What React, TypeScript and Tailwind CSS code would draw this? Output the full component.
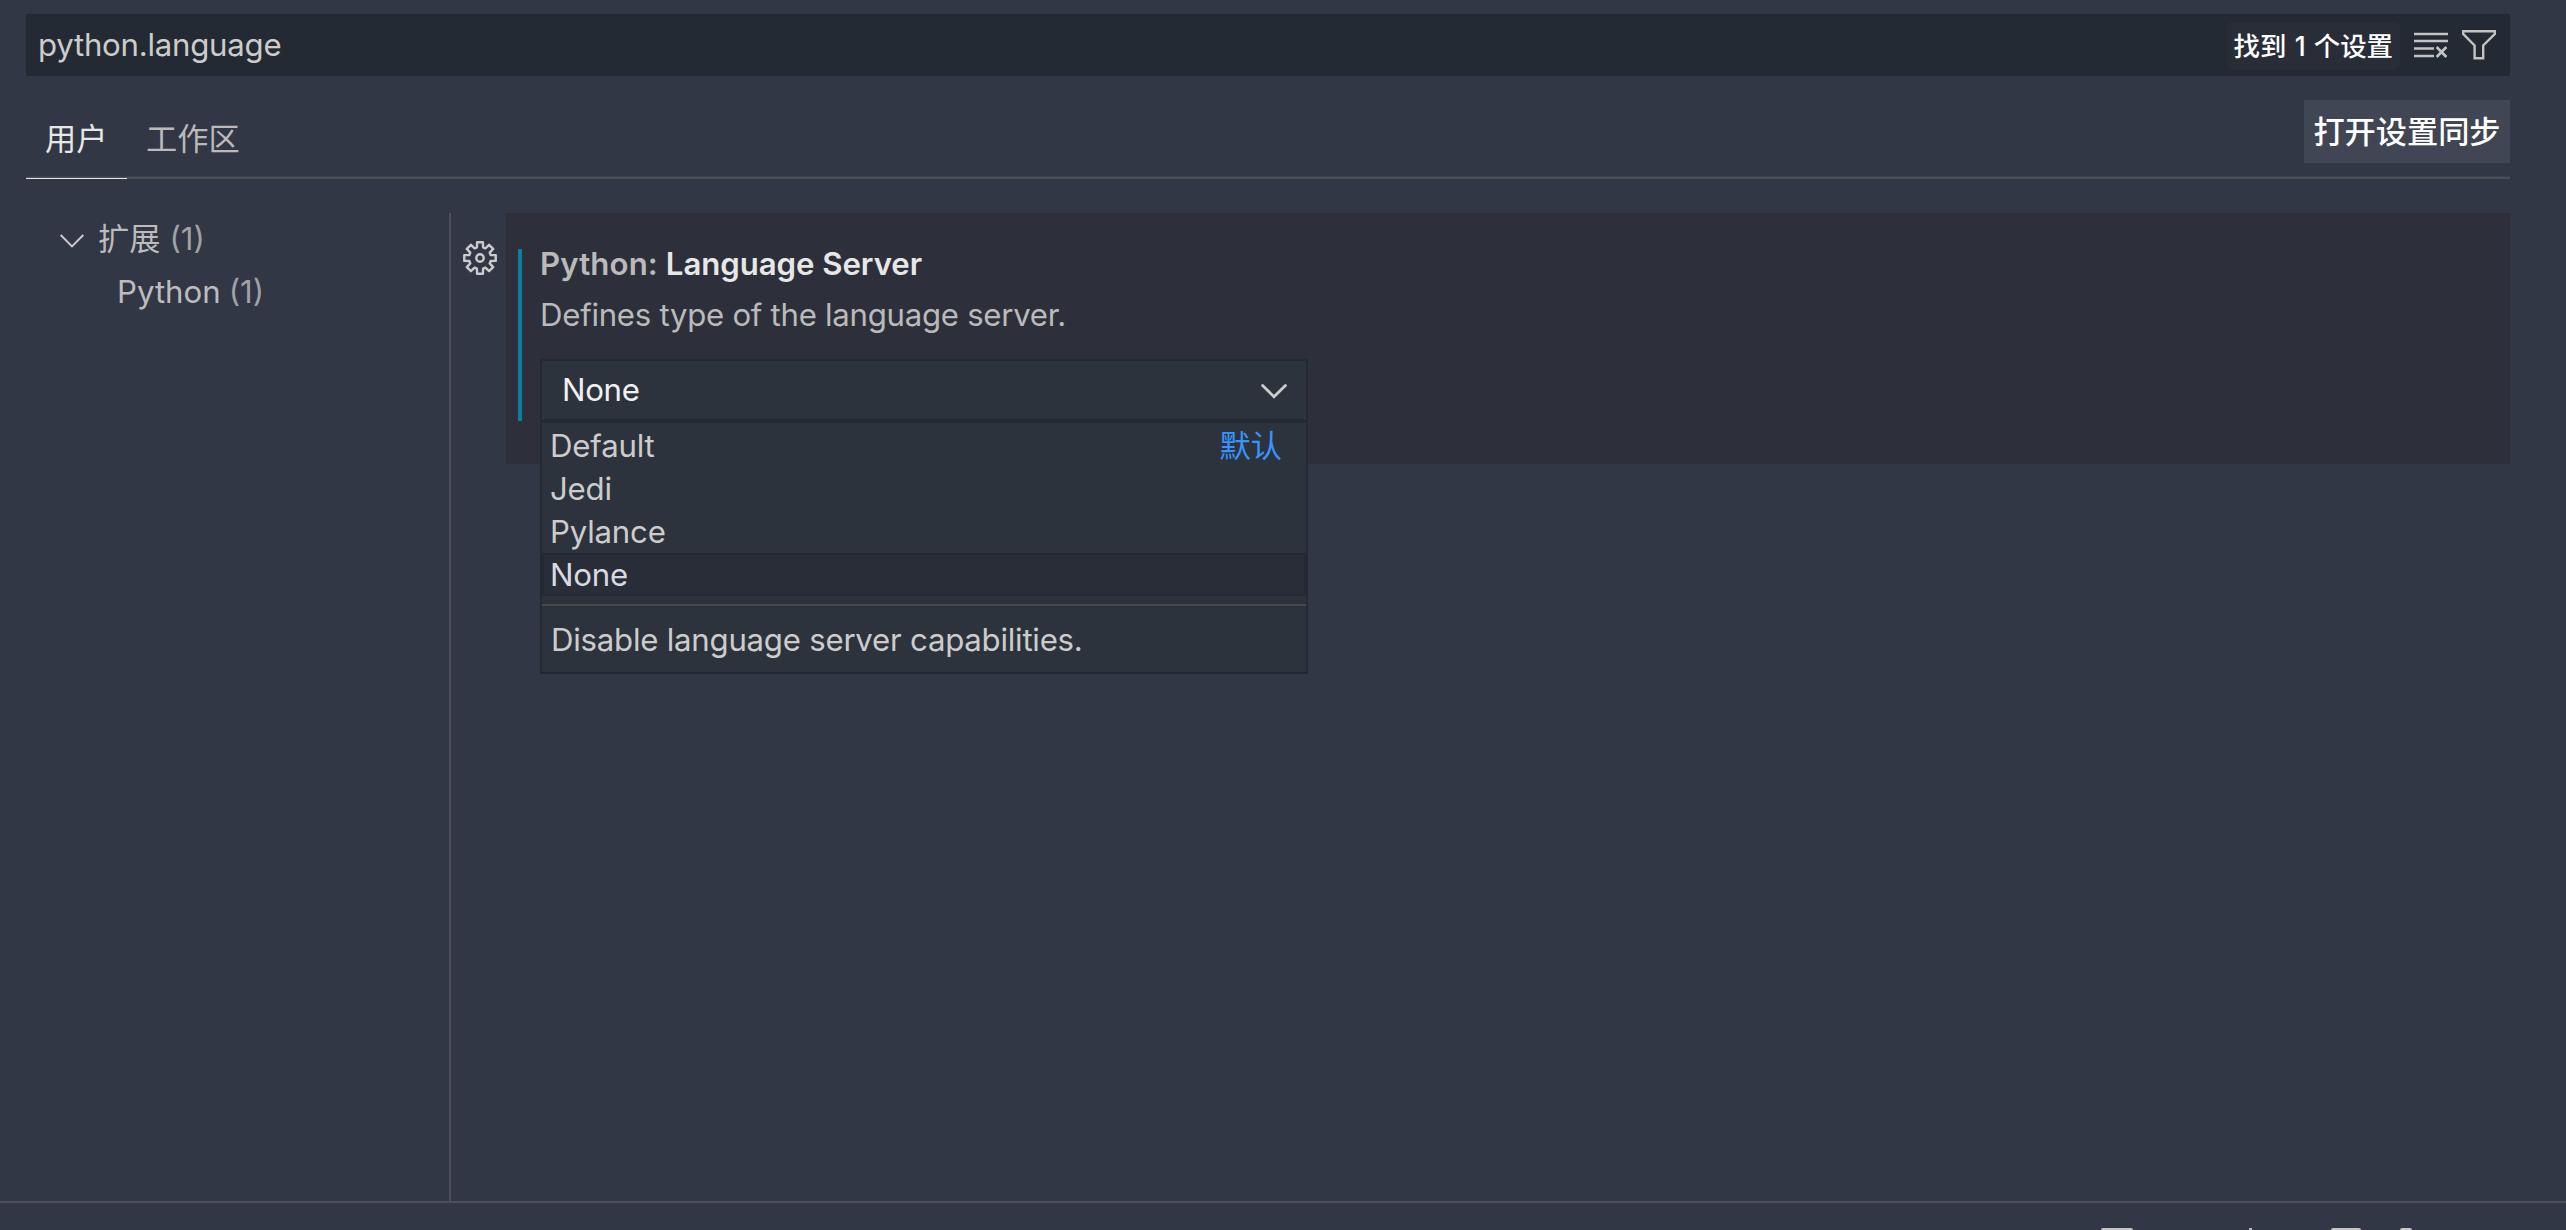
import type { ReactNode } from "react";

const options = [
  { label: "Default", detail: "默认" },
  { label: "Jedi" },
  { label: "Pylance" },
  { label: "None", selected: true },
];

function ClearIcon() {
  return (
    <svg viewBox="0 0 34 26" className="h-[26px] w-[34px]" fill="none" stroke="#c3c3c2">
      <path d="M0 2h34M0 9h34M0 16.5h20M0 24h20" strokeWidth="2.4" />
      <path d="M22.6 15l9.8 10M32.4 15l-9.8 10" strokeWidth="2.6" />
    </svg>
  );
}

function FilterIcon() {
  return (
    <svg viewBox="0 0 34 30" className="h-[30px] w-[34px]" fill="none" stroke="#c3c3c2" strokeWidth="2.4">
      <path d="M1.1 1.3h31.8v2.6L21.2 15.4v12.9h-8.6V15.4L1.1 3.9z" />
    </svg>
  );
}

const teeth = Array.from({ length: 8 }, (_, i) => {
  const at = (r: number, deg: number) => {
    const a = ((i * 45 + deg) * Math.PI) / 180;
    return `${(17 + r * Math.sin(a)).toFixed(2)} ${(17 - r * Math.cos(a)).toFixed(2)}`;
  };
  return `${at(11.1, -16)} L${at(16, -10.5)} L${at(16, 10.5)} L${at(11.1, 16)}`;
});

function GearIcon() {
  return (
    <svg viewBox="0 0 34 34" className="h-[34px] w-[34px]" fill="none" stroke="#cbcbcb" strokeWidth="2.4" strokeLinejoin="round">
      <path d={`M${teeth.join(" L")} Z`} />
      <circle cx="17" cy="17" r="3.7" />
    </svg>
  );
}

function Tab({ active, children }: { active?: boolean; children: ReactNode }) {
  return (
    <div
      className={
        active
          ? "h-[103px] w-[101px] border-b border-[#e7e7e7] pl-[19px] leading-[127px] text-[#e7e7e7]"
          : "h-[103px] w-[132px] pl-[19px] leading-[127px] text-[#bababa]"
      }
    >
      {children}
    </div>
  );
}

export default function App() {
  return (
    <div className="flex h-[1230px] w-[2566px] flex-col overflow-hidden bg-[#313745] font-['Inter','Noto_Sans_CJK_SC',sans-serif] text-[31.2px] text-[#cccccc]">
      <header className="mr-14 ml-[26px] pt-3.5">
        <div className="flex h-[62px] items-center bg-[#232a33] pl-3">
          <span className="grow tracking-[-0.25px]">python.language</span>
          <span className="mt-px h-[47px] rounded-[5px] bg-[#292d37] px-[7px] text-[26.4px] leading-[48px] font-medium text-white [word-spacing:1.2px]">找到 1 个设置</span>
          <div className="ml-3.5 flex items-center gap-3.5 pr-3.5">
            <ClearIcon />
            <FilterIcon />
          </div>
        </div>
        <div className="relative flex h-[103px] justify-between">
          <div className="absolute inset-x-0 bottom-0 h-[3px] border-b-2 border-[#4a5058] bg-[#3b414c]" />
          <nav className="relative flex">
            <Tab active>用户</Tab>
            <Tab>工作区</Tab>
          </nav>
          <button className="mt-6 h-[63px] w-[206px] bg-[#404653] pt-px leading-[63px] font-medium whitespace-nowrap text-white">打开设置同步</button>
        </div>
      </header>

      <main className="mt-[34px] flex h-[988px]">
        <aside className="w-[449px] text-[#bcbcbd]">
          <div className="flex h-[53px] items-center pl-[60px]">
            <svg viewBox="0 0 24 14" className="mt-0.5 h-3.5 w-6" fill="none" stroke="#cccccc" strokeWidth="1.9">
              <path d="M.7 1l11.3 11.3L23.3 1" />
            </svg>
            <span className="ml-3.5">扩展</span>
            <span className="ml-[9px] text-[#a0a2a6]">(1)</span>
          </div>
          <div className="flex h-[53px] items-center pl-[117px]">
            <span>Python</span>
            <span className="ml-2 text-[#a0a2a6]">(1)</span>
          </div>
        </aside>

        <section className="flex grow border-l-2 border-[#4b4f57]">
          <div className="w-[55px] pt-7 pl-3">
            <GearIcon />
          </div>
          <div className="mr-14 flex h-[251px] grow bg-[#2d303b] pl-3">
            <div className="mt-9 h-[172px] w-1 bg-[#0c7d9d]" />
            <div className="ml-[18px] w-[768px]">
              <h2 className="mt-7 h-[46px] leading-[46px] font-semibold whitespace-pre text-[#e7e7e7]">
                <span className="tracking-[0.1px] text-[#bababb]">Python: </span>
                <span className="tracking-[-0.06px]">Language Server</span>
              </h2>
              <p className="mt-1 h-12 leading-[48px] tracking-[-0.28px] text-[#bababb]">Defines type of the language server.</p>
              <div className="relative mt-5">
                <div className="flex h-[62px] items-center justify-between border-2 border-[#232a33] bg-[#2c333d] pr-[19px] pl-5 text-[#f0f0f0]">
                  <span className="tracking-[-0.3px]">None</span>
                  <svg viewBox="0 0 26 15" className="mt-0.5 h-[15px] w-[26px]" fill="none" stroke="#cccccc" strokeWidth="2.8" strokeLinecap="round">
                    <path d="M1.6 1.6L13 12.8 24.4 1.6" />
                  </svg>
                </div>
                <div className="absolute inset-x-0 top-[62px] border-2 border-[#232a33] bg-[#2c333d]">
                  <ul className="pt-px pb-2">
                    {options.map((o) => (
                      <li
                        key={o.label}
                        className={
                          o.selected
                            ? "flex h-[43px] items-center border-2 border-[#232933] bg-[#292d37] px-1.5 pt-px text-[#d7dae0]"
                            : "flex h-[43px] items-center justify-between pt-px pr-6 pl-2"
                        }
                      >
                        <span className="tracking-[-0.2px]">{o.label}</span>
                        {o.detail && <span className="text-[#3794ff]">{o.detail}</span>}
                      </li>
                    ))}
                  </ul>
                  <p className="h-17 border-t-2 border-[#474747] pl-[9px] leading-[68px] tracking-[-0.24px]">Disable language server capabilities.</p>
                </div>
              </div>
            </div>
          </div>
        </section>
      </main>

      <footer className="flex h-[29px] items-end border-t-2 border-[#4b4f57]">
        <div className="ml-[2101px] h-0.5 w-8 rounded-t-sm bg-[#c4c4c4]" />
        <div className="ml-[116px] h-0.5 w-[3px] bg-[#b4b6ba]" />
        <div className="ml-[79px] h-0.5 w-[30px] rounded-t-sm bg-[#c4c4c4]" />
        <div className="ml-[39px] h-0.5 w-3 rounded-t-sm bg-[#c4c4c4]" />
      </footer>
    </div>
  );
}
